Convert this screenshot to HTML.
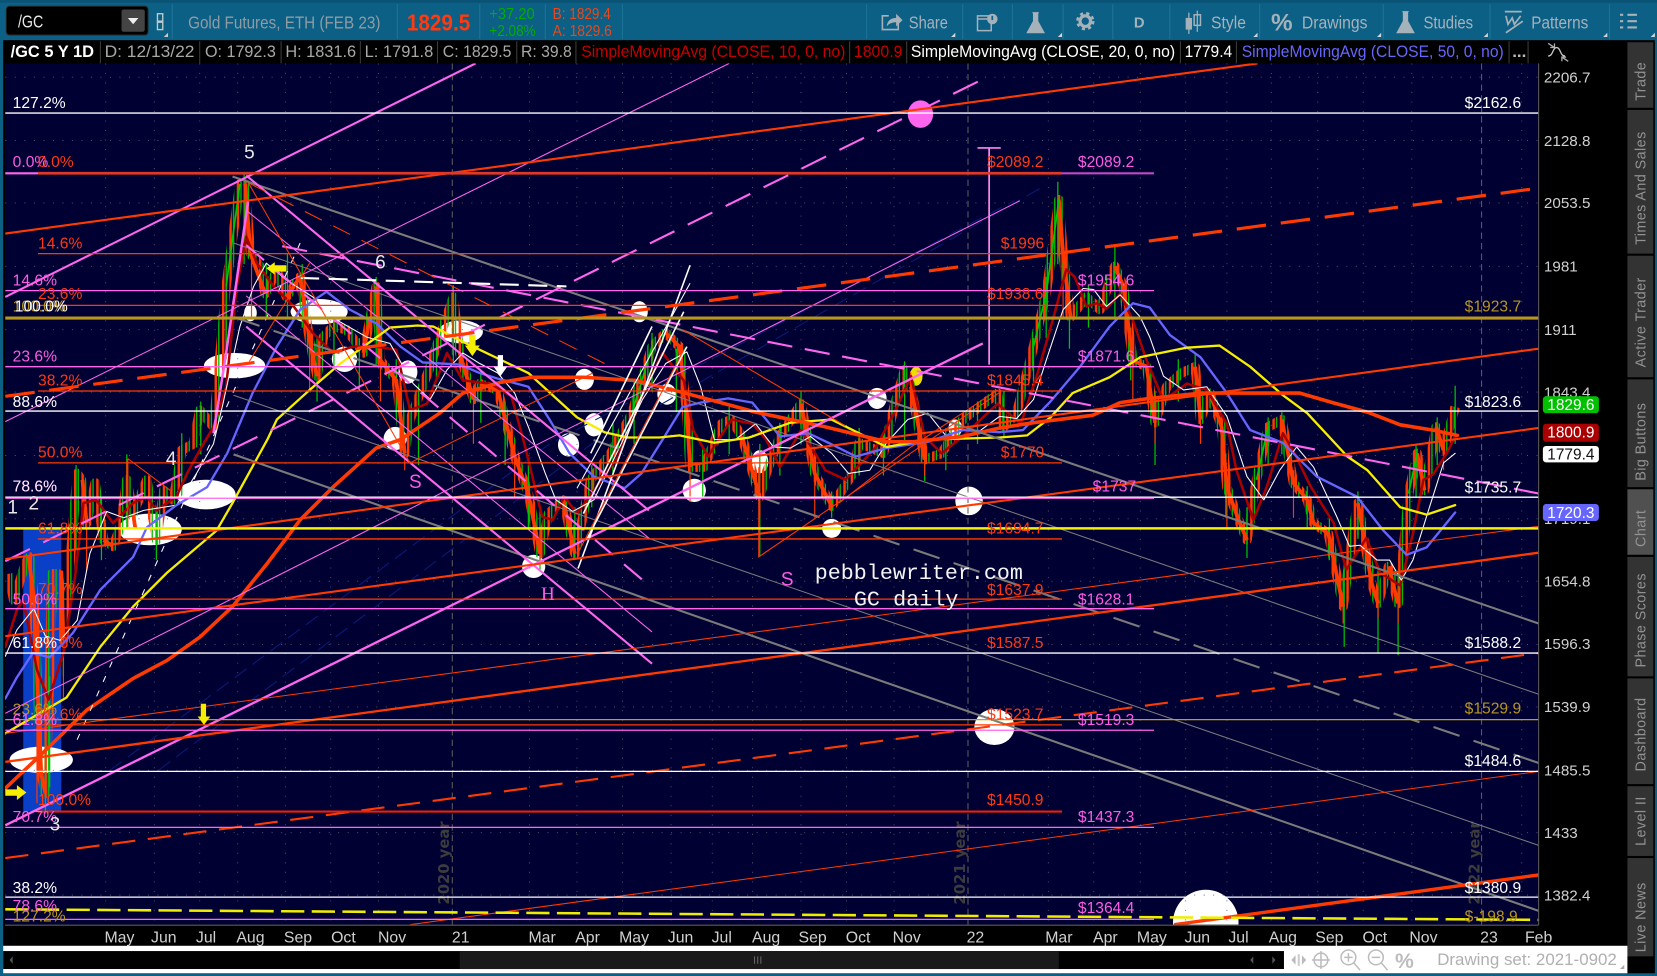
<!DOCTYPE html>
<html lang="en"><head><meta charset="utf-8"><title>/GC chart</title>
<style>
html,body{margin:0;padding:0;background:#0c5f85;width:1657px;height:976px;overflow:hidden}
svg{display:block;font-family:"Liberation Sans",sans-serif}
.o{fill:#ff3a10}.m{fill:#ff5ce6}.w{fill:#fff}.g{fill:#b8961e}
.l{font-size:14.8px}
.ax{font-size:14.4px;fill:#d0d0d0}
.dt{font-size:15px;fill:#d0d0d0;text-anchor:middle}
.tb{font-size:16.5px;fill:#a6b2ba}
.side{font-size:13.6px;fill:#929292;letter-spacing:.4px;text-anchor:middle}
</style></head><body>
<svg xmlns="http://www.w3.org/2000/svg" width="1657" height="976" viewBox="0 0 1568 923.6" preserveAspectRatio="none">
<defs>
<clipPath id="c"><rect x="4.7" y="60" width="1451.3" height="815"/></clipPath>
<pattern id="st" patternUnits="userSpaceOnUse" width="7" height="40">
<rect x="0" y="0" width="2.4" height="40" fill="#ff3a00"/>
<rect x="3.4" y="0" width="1.3" height="40" fill="#00c000"/>
</pattern>
</defs>
<!-- frame -->
<rect width="1568" height="924" fill="#0c5f85"/>
<rect width="1568" height="2.5" fill="#0a5375"/>
<rect x="3" y="38" width="1563" height="883" fill="#000"/>
<rect x="4.7" y="60" width="1451.3" height="815" fill="#000033"/>

<!-- toolbar -->
<rect x="6" y="6" width="134" height="27" rx="3" fill="#000" stroke="#222"/>
<rect x="115" y="9" width="22" height="21" rx="2" fill="#444"/>
<path d="M121 17h10l-5 6z" fill="#eee"/>
<text x="17" y="26" font-size="16.500" fill="#e8e8e8" textLength="24" lengthAdjust="spacingAndGlyphs">/GC</text>
<rect x="149" y="13" width="5" height="7" fill="none" stroke="#bcc" stroke-width="1.3"/><rect x="149" y="21" width="5" height="7" fill="none" stroke="#bcc" stroke-width="1.3"/>
<path d="M155 35l4-4v4z" fill="#ccc"/>
<g stroke="#1a7196" stroke-width="1.2">
<path d="M163 4v33M376 4v33M454 4v33M516 4v33M589 4v33M820 4v33M911 4v33M958 4v33M1006 4v33M1053 4v33M1107 4v33M1192 4v33M1309 4v33M1410 4v33M1523 4v33"/></g>
<text x="178" y="27" font-size="17" fill="#8f9ca4" textLength="182" lengthAdjust="spacingAndGlyphs">Gold Futures, ETH (FEB 23)</text>
<text x="385" y="29" font-size="22" font-weight="bold" fill="#ff3a10" textLength="60" lengthAdjust="spacingAndGlyphs">1829.5</text>
<text x="463" y="18" font-size="15" fill="#00ae00" textLength="43" lengthAdjust="spacingAndGlyphs">+37.20</text>
<text x="463" y="34" font-size="15" fill="#00ae00" textLength="44" lengthAdjust="spacingAndGlyphs">+2.08%</text>
<text x="523" y="18" font-size="15" fill="#e8481c" textLength="55" lengthAdjust="spacingAndGlyphs">B: 1829.4</text>
<text x="523" y="34" font-size="15" fill="#e8481c" textLength="56" lengthAdjust="spacingAndGlyphs">A: 1829.6</text>
<!-- share -->
<path d="M841 15h-6v13h15v-6" fill="none" stroke="#a6b2ba" stroke-width="1.5"/>
<path d="M839 25q1-8 9-8v-4l6 6-6 6v-4q-6 0-9 4z" fill="#a6b2ba"/>
<text x="860" y="27" class="tb" textLength="37" lengthAdjust="spacingAndGlyphs">Share</text>
<!-- alert -->
<path d="M925 15h13v14h-13zM925 18h9" fill="none" stroke="#a6b2ba" stroke-width="1.4"/><circle cx="939" cy="18" r="5" fill="#a6b2ba"/><rect x="938.200" y="15" width="1.6" height="4" fill="#0c5f85"/>
<!-- flask -->
<path d="M977 12h6M978 12v8l-6 11h16l-6-11v-8z" fill="#a6b2ba" stroke="#a6b2ba" stroke-width="1"/>
<!-- gear -->
<circle cx="1027" cy="20" r="5" fill="none" stroke="#a6b2ba" stroke-width="3"/><circle cx="1027" cy="20" r="7.500" fill="none" stroke="#a6b2ba" stroke-width="2.4" stroke-dasharray="3 3"/>
<text x="1078" y="26" font-size="14" font-weight="bold" fill="#a6b2ba" text-anchor="middle">D</text>
<!-- candles icon -->
<path d="M1125 12v20M1133 10v20" stroke="#a6b2ba" stroke-width="1.2"/><rect x="1122" y="17" width="6" height="11" fill="#a6b2ba"/><rect x="1130" y="14" width="6" height="10" fill="none" stroke="#a6b2ba" stroke-width="1.4"/>
<text x="1146" y="27" class="tb" textLength="33" lengthAdjust="spacingAndGlyphs">Style</text>
<text x="1213" y="29" font-size="23" font-weight="bold" fill="#a6b2ba" text-anchor="middle">%</text>
<text x="1232" y="27" class="tb" textLength="62" lengthAdjust="spacingAndGlyphs">Drawings</text>
<path d="M1327 11h6M1328 11v9l-6 11h16l-6-11v-9z" fill="#a6b2ba" stroke="#a6b2ba" stroke-width="1"/>
<text x="1347" y="27" class="tb" textLength="47" lengthAdjust="spacingAndGlyphs">Studies</text>
<path d="M1424 11h16M1425 15l2 8 4-6 2 6 6-8M1425 31l16-11" fill="none" stroke="#a6b2ba" stroke-width="1.6"/>
<text x="1449" y="27" class="tb" textLength="54" lengthAdjust="spacingAndGlyphs">Patterns</text>
<path d="M1540 14h9M1540 20h9M1540 26h9" stroke="#a6b2ba" stroke-width="2"/><path d="M1533 14h3M1533 20h3M1533 26h3" stroke="#a6b2ba" stroke-width="2"/>
<g fill="#d0d4d8"><path d="M900 35l4-4v4zM1001 35l4-4v4zM1186 35l4-4v4zM1303 35l4-4v4zM1404 35l4-4v4zM1517 35l4-4v4zM1562 35l4-4v4z"/></g>

<!-- legend -->
<text x="10" y="54" font-size="16" font-weight="bold" fill="#fff" textLength="79" lengthAdjust="spacingAndGlyphs">/GC 5 Y 1D</text>
<g font-size="16" fill="#a8a8a8">
<text x="99" y="54" textLength="85" lengthAdjust="spacingAndGlyphs">D: 12/13/22</text>
<text x="194" y="54" textLength="67" lengthAdjust="spacingAndGlyphs">O: 1792.3</text>
<text x="270" y="54" textLength="67" lengthAdjust="spacingAndGlyphs">H: 1831.6</text>
<text x="345" y="54" textLength="65" lengthAdjust="spacingAndGlyphs">L: 1791.8</text>
<text x="419" y="54" textLength="65" lengthAdjust="spacingAndGlyphs">C: 1829.5</text>
<text x="493" y="54" textLength="48" lengthAdjust="spacingAndGlyphs">R: 39.8</text>
</g>
<g font-size="16">
<text x="550" y="54" fill="#c40000" textLength="250" lengthAdjust="spacingAndGlyphs">SimpleMovingAvg (CLOSE, 10, 0, no)</text>
<text x="808" y="54" fill="#c40000" textLength="46" lengthAdjust="spacingAndGlyphs">1800.9</text>
<text x="862" y="54" fill="#fff" textLength="250" lengthAdjust="spacingAndGlyphs">SimpleMovingAvg (CLOSE, 20, 0, no)</text>
<text x="1121" y="54" fill="#fff" textLength="45" lengthAdjust="spacingAndGlyphs">1779.4</text>
<text x="1175" y="54" fill="#6666ff" textLength="248" lengthAdjust="spacingAndGlyphs">SimpleMovingAvg (CLOSE, 50, 0, no)</text>
<text x="1431" y="54" fill="#bbb" font-weight="bold">...</text>
</g>
<path d="M95 39v21M189 39v21M266 39v21M341 39v21M414 39v21M489 39v21M545 39v21M804 39v21M858 39v21M1117 39v21M1170 39v21M1428 39v21M1446 39v21" stroke="#3c3c3c" stroke-width="1"/>
<path d="M1465 53c5 0 4-8 8-8s3 8 8 8" fill="none" stroke="#ccc" stroke-width="1.200"/><path d="M1465 41l6 4M1471 41v4h-4M1484 58l-6-4M1478 58v-4h4" stroke="#b0b0b0" stroke-width="1.200" fill="none"/>

<g clip-path="url(#c)">
<!-- blue block -->
<rect x="22" y="500" width="36" height="268" fill="#0a3fc8"/>
<!-- ellipses -->
<g fill="#fff">
<ellipse cx="39" cy="719" rx="30" ry="12.5"/><ellipse cx="142" cy="501" rx="30" ry="15"/><ellipse cx="195" cy="468" rx="28" ry="14"/>
<ellipse cx="222" cy="346" rx="29" ry="12"/><ellipse cx="302" cy="295" rx="27" ry="12"/><ellipse cx="436" cy="314" rx="21" ry="11"/>
<ellipse cx="326" cy="340" rx="12" ry="12"/><ellipse cx="386" cy="352" rx="9" ry="11"/><ellipse cx="237" cy="296" rx="6" ry="8"/>
<ellipse cx="374" cy="415" rx="11" ry="11"/><ellipse cx="605" cy="295" rx="8" ry="10"/><ellipse cx="553" cy="359" rx="9" ry="10"/>
<ellipse cx="631" cy="373" rx="9" ry="10"/><ellipse cx="562" cy="402" rx="9" ry="11"/><ellipse cx="538" cy="421" rx="10" ry="11"/>
<ellipse cx="719" cy="437" rx="8" ry="11"/><ellipse cx="657" cy="464" rx="11" ry="11"/><ellipse cx="787" cy="500" rx="9" ry="9"/>
<ellipse cx="830" cy="377" rx="9" ry="10"/><ellipse cx="917" cy="474" rx="13" ry="13.5"/><ellipse cx="904" cy="405" rx="6.5" ry="8"/>
<ellipse cx="505" cy="536" rx="11" ry="11"/><ellipse cx="941" cy="688" rx="19" ry="17"/><ellipse cx="1141" cy="873" rx="31" ry="31"/>
</g>
<ellipse cx="871" cy="108" rx="12" ry="13" fill="#ff66ee"/><ellipse cx="867" cy="356" rx="6" ry="9" fill="#eedd00"/>
<!-- grid -->
<path d="M5 73H1456M5 133H1456M5 192H1456M5 252H1456M5 312H1456M5 371H1456M5 431H1456M5 491H1456M5 550H1456M5 610H1456M5 669H1456M5 729H1456M5 788H1456M5 847H1456" stroke="#5a5a70" stroke-width=".8" stroke-dasharray="1 8"/>
<path d="M100 60V875M146 60V875M189 60V875M225 60V875M270 60V875M313 60V875M358 60V875M501 60V875M546 60V875M589 60V875M635 60V875M674 60V875M712 60V875M758 60V875M801 60V875M846 60V875M992 60V875M1035 60V875M1079 60V875M1122 60V875M1161 60V875M1203 60V875M1247 60V875M1290 60V875M1336 60V875M1440 60V875" stroke="#5a5a70" stroke-width=".8" stroke-dasharray="1 8"/>
<path d="M428 60V875M916 60V875M1402 60V875" stroke="#5c5c5c" stroke-width="1" stroke-dasharray="6 4"/>
<g font-family="DejaVu Sans,sans-serif" font-size="14" font-weight="bold" fill="#3c3c3c">
<text transform="translate(425,856) rotate(-90)">2020 year</text>
<text transform="translate(913,856) rotate(-90)">2021 year</text>
<text transform="translate(1400,856) rotate(-90)">2022 year</text>
</g>
<!-- navy lines -->
<path d="M104 729L520 420L960 190M150 729L560 420L990 175" stroke="#0c1a78" stroke-width="1" fill="none" stroke-dasharray="14 7"/>

<!-- candles -->
<polyline fill="none" stroke="url(#st)" stroke-width="9" stroke-linejoin="round" points="8,543 13,568 24,533 28,527 32,565 35,637 39,732 43,751 47,637 49,543 55,543 60,606 68,511 73,448 77,454 82,495 90,457 98,511 107,517 114,498 120,454 126,486 139,454 148,511 155,464 164,473 172,426 183,420 189,388 202,404 214,271 227,174 232,174 237,240 246,252 251,278 262,256 271,281 284,262 293,322 300,356 306,319 315,309 328,312 344,334 356,271 360,341 375,360 383,429 388,397 407,347 413,328 429,281 435,334 448,378 454,363 471,369 487,432 500,467 511,524 519,486 533,473 544,524 559,454 578,429 598,391 617,328 630,315 643,328 650,391 653,442 666,442 683,401 692,397 702,413 719,470 725,448 738,413 758,382 771,448 787,479 807,448 813,419 836,429 846,385 856,350 862,366 875,435 891,429 911,397 944,372 950,404 962,391 978,328 990,278 1002,189 1006,240 1013,300 1028,281 1041,293 1055,252 1063,271 1072,341 1085,347 1093,400 1104,366 1118,353 1131,347 1136,397 1145,372 1156,404 1161,461 1172,492 1180,511 1189,454 1200,404 1213,397 1224,457 1237,473 1243,495 1257,505 1271,574 1281,498 1285,476 1298,552 1304,571 1314,536 1323,571 1333,467 1341,429 1348,464 1359,404 1366,426 1377,385"/>
<!-- wicks -->
<path d="M43 700V770M47 640V745M60 560V640M72 440V520M96 470V530M120 430V500M148 480V530M172 410V470M190 380V430M214 270V340M231 165V250M252 250V300M272 240V300M286 250V310M300 320V380M316 300V350M340 320V370M356 262V345M375 340V390M396 380V440M413 320V360M429 270V345M455 350V400M478 380V440M500 440V500M511 480V540M544 480V530M560 440V480M580 400V450M600 360V420M617 315V370M640 330V390M665 425V470M690 385V430M719 420V526M738 400V450M758 370V420M787 465V490M813 405V450M836 410V450M856 342V420M875 420V455M895 405V445M925 380V420M950 370V415M978 320V370M1001 172V250M1012 290V330M1030 270V310M1055 232V300M1070 310V360M1093 370V440M1115 340V380M1131 335V380M1160 430V490M1180 480V528M1200 395V440M1213 390V430M1237 460V500M1258 490V530M1272 530V612M1285 465V510M1304 540V618M1323 540V620M1340 420V470M1360 395V440M1377 365V420M990 262V320" stroke="#00c000" stroke-width="1.200"/>
<path d="M35 620V760M60 590V660M82 480V540M120 436V470M238 230V300M293 310V370M360 330V380M383 415V445M448 365V420M487 420V470M511 500V530M653 430V475M719 440V490M771 430V490M875 420V450M1006 232V300M1072 330V380M1093 385V420M1136 385V420M1161 450V500M1224 445V490M1271 560V590M1304 555V585M1323 555V590M1366 420V445" stroke="#ff3a00" stroke-width="1.100"/>
<path d="M27 527L32 565L35 637L39 732L43 751M58 540L60 606M78 454L82 495M98 511L107 517M126 486L128 500M232 174L237 240L251 278M271 281L284 262M284 262L293 322L300 356M344 334L350 300M356 271L360 341L375 360L383 429M435 334L448 378M454 363L471 369L487 432L500 467L511 524M533 473L544 524M630 315L643 328L650 391L653 442M702 413L719 470M758 382L771 448L787 479M862 366L875 435M1002 189L1006 240L1013 300M1055 252L1063 271L1072 341L1085 347L1093 400M1131 347L1136 397M1145 372L1156 404L1161 461L1172 492L1180 511M1213 397L1224 457L1237 473L1243 495L1257 505L1271 574M1285 476L1298 552L1304 571M1314 536L1323 571M1348 464L1341 429M1359 404L1366 426" fill="none" stroke="#ff3a00" stroke-width="3.600"/>
<path d="M214 271L227 174M978 328L990 278L1002 189M598 391L617 328M1333 467L1341 429M1189 454L1200 404" stroke="#00c800" stroke-width="1.600" fill="none"/>

<!-- MAs -->
<g stroke-linejoin="round" stroke-linecap="round" fill="none">
<polyline stroke="#aa0000" stroke-width="2.400" points="5,612 16,577 22,568 35,634 46,662 60,618 71,546 79,476 91,473 107,495 126,476 139,470 148,483 167,470 177,448 189,426 202,404 214,366 224,271 233,224 243,249 259,271 278,290 296,315 315,334 334,328 356,328 375,331 388,388 404,382 423,334 438,360 464,363 484,375 497,423 513,489 523,492 534,470 546,486 562,464 585,432 611,366 627,334 647,360 656,407 670,432 692,397 712,401 725,416 738,442 758,407 781,445 800,454 829,423 846,391 862,356 875,413 891,429 911,413 944,382 966,401 981,356 997,300 1009,255 1017,262 1028,290 1038,287 1047,292 1060,278 1072,303 1085,341 1101,379 1123,363 1142,369 1161,401 1170,445 1186,492 1199,460 1214,410 1225,429 1240,460 1262,495 1274,539 1293,509 1306,542 1325,554 1337,505 1347,454 1356,449 1369,429 1377,413"/>
<polyline stroke="#fff" stroke-width="1" points="5,621 16,596 32,576 43,602 57,606 73,587 85,524 101,484 117,490 136,483 167,478 186,448 202,420 211,382 227,309 240,271 252,249 271,265 296,281 319,303 347,319 369,325 391,363 407,378 423,350 438,334 454,344 471,353 487,372 500,404 516,448 526,473 542,484 562,473 585,426 608,378 630,344 650,333 663,366 676,416 696,416 715,401 732,423 748,424 767,413 787,429 803,448 823,445 839,419 859,397 878,391 898,416 924,410 946,394 962,396 978,378 990,341 1006,293 1025,273 1035,274 1047,290 1060,279 1079,300 1088,319 1101,356 1120,369 1142,366 1161,394 1180,451 1196,473 1211,445 1227,423 1243,442 1265,489 1277,517 1287,516 1303,530 1315,530 1326,549 1337,530 1353,479 1366,438 1377,429"/>
<polyline stroke="#6666ff" stroke-width="2.200" points="5,661 16,641 31,618 47,622 69,599 95,558 126,527 139,499 167,478 196,461 215,429 239,372 262,328 284,293 309,276 331,293 356,306 379,328 400,343 435,345 454,353 470,358 500,366 520,397 539,429 562,451 591,462 607,448 627,416 646,385 663,381 689,377 712,381 738,413 765,410 784,419 810,432 839,424 878,418 911,407 946,409 968,407 994,380 1022,347 1050,309 1072,287 1088,291 1107,317 1136,338 1161,372 1183,407 1214,419 1246,451 1284,470 1309,502 1331,525 1350,518 1377,485"/>
<polyline stroke="#f5ee00" stroke-width="2.200" points="5,694 63,660 95,612 126,574 158,542 205,502 220,476 253,416 262,397 293,369 322,344 344,328 369,310 395,308 410,309 435,322 454,331 500,353 546,395 572,409 594,414 624,414 643,412 676,419 709,414 748,400 787,397 839,423 878,416 946,414 972,412 994,395 1015,372 1050,357 1079,338 1123,329 1154,327 1183,347 1214,374 1237,391 1275,432 1294,445 1325,480 1350,487 1377,478"/>
<polyline stroke="#ff3a00" stroke-width="3.400" points="5,746 40,713 82,672 126,642 158,625 189,603 220,574 253,533 284,492 315,461 356,424 379,416 416,391 438,372 473,362 503,357 552,357 601,360 637,369 682,381 715,390 781,404 839,418 865,418 911,413 946,405 978,400 1010,396 1034,393 1060,381 1088,377 1136,372 1183,372 1230,372 1261,381 1294,390 1325,402 1356,407 1379,412"/>
</g>

<!-- gray lines -->
<g fill="none" stroke="#7a7a7a">
<path d="M220 167L1456 590" stroke-width="2"/>
<path d="M221 230L1456 657" stroke-width="1"/>
<path d="M221 300L1456 722" stroke-width="2" stroke-dasharray="26 14"/>
<path d="M221 374L1456 800" stroke-width="1"/>
<path d="M221 430L1456 862" stroke-width="2"/>
</g>
<!-- magenta lines -->
<g fill="none" stroke="#ff66ee">
<path d="M5 281L450 60" stroke-width="2"/>
<path d="M5 399L690 60" stroke-width="1"/>
<path d="M5 781L930 325" stroke-width="2.200"/>
<path d="M5 531L930 75" stroke-width="2" stroke-dasharray="26 14"/>
<path d="M5 675L965 190" stroke-width="1"/>
<path d="M233 166L614 483" stroke-width="2"/>
<path d="M233 309L617 628" stroke-width="2"/>
<path d="M233 199L615 510" stroke-width="1"/>
<path d="M233 280L617 598" stroke-width="1"/>
<path d="M233 232L613 553" stroke-width="2" stroke-dasharray="22 14"/>
<path d="M267 233L1456 467" stroke-width="2" stroke-dasharray="24 12"/>
<path d="M235 189L214 334L202 410" stroke-width="2.400"/>
</g>
<path d="M925 140h22M936 140V345" stroke="#ff88ee" stroke-width="1.600" fill="none"/>

<!-- white lines -->
<g fill="none" stroke="#fff">
<path d="M547 538L653 251" stroke-width="1.500"/><path d="M546 462L653 268" stroke-width="1"/><path d="M555 511L650 328" stroke-width="1.500"/><path d="M552 486L647 295" stroke-width="1.500"/><path d="M559 429L617 309" stroke-width="1.500"/>
<path d="M284 263L536 271" stroke-width="2" stroke-dasharray="18 9"/>
<path d="M73 700L284 230" stroke-width="1" stroke-dasharray="6 9"/>
</g>

<!-- thin orange -->
<g fill="none" stroke="#ff3a00" stroke-width="1">
<path d="M235 173L388 438L561 353"/><path d="M236 342L293 249"/><path d="M121 434L161 464M121 434V500"/>
<path d="M235 173L578 347" stroke-dasharray="18 12"/>
<path d="M646 312L800 403"/><path d="M546 525L647 331"/><path d="M718 442V527L945 372"/><path d="M794 476L862 423L944 369"/>
</g>
<!-- sloped orange -->
<g fill="none" stroke="#ff3a00">
<path d="M5 221L1190 60" stroke-width="2"/>
<path d="M5 375L1456 178" stroke-width="3" stroke-dasharray="28 14"/>
<path d="M5 529L1456 330" stroke-width="2"/>
<path d="M5 602L1456 405" stroke-width="2"/>
<path d="M5 721L1456 523" stroke-width="2.200"/>
<path d="M5 694L1456 498" stroke-width="1"/>
<path d="M5 812L1456 618" stroke-width="2" stroke-dasharray="22 12"/>
<path d="M388 875L1456 730" stroke-width="1"/>
<path d="M1111 875L1456 828" stroke-width="3.200"/>
</g>
<!-- horizontals -->
<g fill="none" stroke-width="1.200">
<path d="M5 107H1456M5 389H1456M5 470.5H1456M5 618H1456M5 730H1456M5 849H1456" stroke="#fff"/>
<path d="M36 240H1005M36 289H1005M36 370H1005M36 438H1005M36 510H1005M36 567H1005M36 686H1005" stroke="#ff3a00"/>
<path d="M5 275H1092M5 347H1092M5 471.5H1092M5 576H1092M5 691H1092M5 783H1092M5 870H1092" stroke="#ff66ee"/>
<path d="M5 681H1456" stroke="#c8a000"/>
<path d="M36 768H1005" stroke="#e8200c" stroke-width="2"/>
<path d="M5 164H36" stroke="#ff66ee" stroke-width="2"/>
<path d="M36 164H1005" stroke="#e03828" stroke-width="2.600"/>
<path d="M1005 164H1092" stroke="#c04ac4" stroke-width="2"/>
<path d="M5 301H1456" stroke="#b8961e" stroke-width="3"/>
<path d="M5 500H1456" stroke="#f5f000" stroke-width="2.400"/>
<path d="M5 860.5L1456 870.5" stroke="#eeee00" stroke-width="2.400" stroke-dasharray="22 7"/>
</g>
<!-- arrows -->
<path d="M252 254l8-6v3h11v6h-11v3z" fill="#f5ee00"/>
<path d="M5 747h11v-4l9 7-9 7v-4H5z" fill="#f5ee00"/>
<path d="M444 317h6v10h4l-7 10-7-10h4z" fill="#f5ee00"/>
<path d="M190 666h5v12h4l-6 8-6-8h3z" fill="#f5ee00"/>
<path d="M471 336h5v11h4l-6.500 9-6.500-9h4z" fill="#fff"/>

<!-- left labels -->
<g class="l">
<text x="12" y="102" class="w">127.2%</text>
<text x="12" y="158" class="m">0.0%</text><text x="36" y="158" class="o">0.0%</text>
<text x="36" y="235" class="o">14.6%</text>
<text x="12" y="270" class="m">14.6%</text>
<text x="36" y="283" class="o">23.6%</text>
<text x="12" y="295" class="g">100.0%</text><text x="14" y="295" class="w">100.0%</text>
<text x="12" y="342" class="m">23.6%</text>
<text x="36" y="365" class="o">38.2%</text>
<text x="12" y="385" class="w">88.6%</text>
<text x="36" y="433" class="o">50.0%</text>
<text x="12" y="465" class="m">78.6%</text><text x="12" y="465" class="w" opacity=".85">78.6%</text>
<text x="36" y="505" class="o">61.8%</text>
<text x="36" y="562" class="o">70.7%</text>
<text x="12" y="572" class="m">50.0%</text>
<text x="36" y="613" class="o">78.6%</text>
<text x="12" y="613" class="w">61.8%</text>
<text x="12" y="676" class="g">23.6%</text>
<text x="36" y="681" class="o">78.6%</text>
<text x="12" y="686" class="m">61.8%</text>
<text x="36" y="762" class="o">100.0%</text>
<text x="12" y="778" class="m">70.7%</text>
<text x="12" y="845" class="w">38.2%</text>
<text x="12" y="862" class="m">78.6%</text>
<text x="12" y="872" class="g">127.2%</text>
<!-- right labels -->
<text x="1386" y="102" class="w">$2162.6</text>
<text x="1386" y="295" class="g">$1923.7</text>
<text x="1386" y="385" class="w">$1823.6</text>
<text x="1386" y="466" class="w">$1735.7</text>
<text x="1386" y="613" class="w">$1588.2</text>
<text x="1386" y="675" class="g">$1529.9</text>
<text x="1386" y="725" class="w">$1484.6</text>
<text x="1386" y="845" class="w">$1380.9</text>
<text x="1386" y="872" class="g">$-198.9</text>
<!-- mid orange -->
<text x="934" y="158" class="o">$2089.2</text>
<text x="947" y="235" class="o">$1996</text>
<text x="934" y="283" class="o">$1938.6</text>
<text x="934" y="365" class="o">$1845.4</text>
<text x="947" y="433" class="o">$1770</text>
<text x="934" y="505" class="o">$1694.7</text>
<text x="934" y="563" class="o">$1637.9</text>
<text x="934" y="613" class="o">$1587.5</text>
<text x="934" y="681" class="o">$1523.7</text>
<text x="934" y="762" class="o">$1450.9</text>
<!-- mid magenta -->
<text x="1020" y="158" class="m">$2089.2</text>
<text x="1020" y="270" class="m">$1954.6</text>
<text x="1020" y="342" class="m">$1871.6</text>
<text x="1034" y="465" class="m">$1737</text>
<text x="1020" y="572" class="m">$1628.1</text>
<text x="1020" y="686" class="m">$1519.3</text>
<text x="1020" y="778" class="m">$1437.3</text>
<text x="1020" y="864" class="m">$1364.4</text>
</g>
<g font-size="18" fill="#e8e8e8">
<text x="7" y="486">1</text><text x="27" y="482">2</text><text x="157" y="440">4</text><text x="231" y="150">5</text><text x="355" y="254">6</text><text x="47" y="786">3</text>
</g>
<g font-size="18" fill="#ff5ce6">
<text x="387" y="462">S</text><text x="512" y="568" font-family="Liberation Serif,serif">H</text><text x="739" y="554">S</text>
</g>
<g font-family="Liberation Mono,monospace" font-size="20" fill="#f4f4f4">
<text x="771" y="548" textLength="197" lengthAdjust="spacingAndGlyphs">pebblewriter.com</text>
<text x="808" y="573" textLength="99" lengthAdjust="spacingAndGlyphs">GC daily</text>
</g>
</g>
<path d="M4.700 875.5H1456M1456 60V875.5" stroke="#5a5a5a" stroke-width="1" fill="none"/>

<!-- axis -->
<g class="ax">
<text x="1461" y="78">2206.7</text><text x="1461" y="138">2128.8</text><text x="1461" y="197">2053.5</text><text x="1461" y="257">1981</text><text x="1461" y="317">1911</text><text x="1461" y="376">1843.4</text><text x="1461" y="496">1719.1</text><text x="1461" y="555">1654.8</text><text x="1461" y="614">1596.3</text><text x="1461" y="674">1539.9</text><text x="1461" y="734">1485.5</text><text x="1461" y="793">1433</text><text x="1461" y="852">1382.4</text>
</g>
<g font-size="14.6" text-anchor="middle">
<rect x="1460" y="375" width="53" height="16" rx="3" fill="#00c000"/><text x="1486.5" y="388" fill="#fff">1829.6</text>
<rect x="1460" y="401" width="53" height="17" rx="3" fill="#aa0000"/><text x="1486.5" y="414" fill="#fff">1800.9</text>
<rect x="1460" y="422" width="53" height="15.5" rx="3" fill="#fff"/><text x="1486.5" y="435" fill="#111">1779.4</text>
<rect x="1460" y="477" width="53" height="16" rx="3" fill="#6666ff"/><text x="1486.5" y="490" fill="#fff">1720.3</text>
</g>
<g class="dt">
<text x="113" y="892">May</text><text x="155" y="892">Jun</text><text x="195" y="892">Jul</text><text x="237" y="892">Aug</text><text x="282" y="892">Sep</text><text x="325" y="892">Oct</text><text x="371" y="892">Nov</text><text x="436" y="892">21</text><text x="513" y="892">Mar</text><text x="556" y="892">Apr</text><text x="600" y="892">May</text><text x="644" y="892">Jun</text><text x="683" y="892">Jul</text><text x="725" y="892">Aug</text><text x="769" y="892">Sep</text><text x="812" y="892">Oct</text><text x="858" y="892">Nov</text><text x="923" y="892">22</text><text x="1002" y="892">Mar</text><text x="1046" y="892">Apr</text><text x="1090" y="892">May</text><text x="1133" y="892">Jun</text><text x="1172" y="892">Jul</text><text x="1214" y="892">Aug</text><text x="1258" y="892">Sep</text><text x="1301" y="892">Oct</text><text x="1347" y="892">Nov</text><text x="1409" y="892">23</text><text x="1456" y="892">Feb</text>
</g>

<!-- sidebar -->
<g fill="#333">
<rect x="1540" y="40" width="24.5" height="62"/><rect x="1540" y="104" width="24.5" height="136"/><rect x="1540" y="242" width="24.5" height="115"/><rect x="1540" y="359" width="24.5" height="102"/>
<rect x="1540" y="463" width="24.5" height="62" fill="#505050"/><rect x="1540" y="527" width="24.5" height="113"/><rect x="1540" y="642" width="24.5" height="100"/><rect x="1540" y="744" width="24.5" height="66"/><rect x="1540" y="812" width="24.5" height="93"/>
</g>
<g class="side">
<text transform="translate(1557,77) rotate(-90)">Trade</text>
<text transform="translate(1557,178) rotate(-90)">Times And Sales</text>
<text transform="translate(1557,305) rotate(-90)">Active Trader</text>
<text transform="translate(1557,418) rotate(-90)">Big Buttons</text>
<text transform="translate(1557,500) rotate(-90)">Chart</text>
<text transform="translate(1557,587) rotate(-90)">Phase Scores</text>
<text transform="translate(1557,695) rotate(-90)">Dashboard</text>
<text transform="translate(1557,777) rotate(-90)">Level II</text>
<text transform="translate(1557,868) rotate(-90)">Live News</text>
</g>

<!-- bottom -->
<rect x="3" y="895" width="1537" height="26" fill="#fff"/>
<rect x="3" y="900" width="1212" height="17" fill="#000"/>
<rect x="435" y="900" width="567" height="17" fill="#1a1a1a"/>
<path d="M714 905v7M717 905v7M720 905v7" stroke="#666" stroke-width="1"/>
<path d="M12 905l-3 3.500 3 3.500zM1186 905l-3 3.500 3 3.500zM1204 905l3 3.500-3 3.500z" fill="#555"/>
<path d="M1226 904l-4 4.500 4 4.500zM1232 904l4 4.500-4 4.500z" fill="#bbb"/><path d="M1229 903v11" stroke="#ccc" stroke-width="2"/>
<g fill="none" stroke="#bcbcbc" stroke-width="1.400">
<circle cx="1250" cy="908.500" r="6.500"/><path d="M1250 900v17M1241.500 908.500h17"/>
<circle cx="1276" cy="906" r="7"/><path d="M1281 911l6 7M1272 906h8M1276 902v8"/>
<circle cx="1302" cy="906" r="7"/><path d="M1307 911l6 7M1298 906h8"/>
</g>
<text x="1329" y="916" font-size="20" font-weight="bold" fill="#bcbcbc" text-anchor="middle">%</text>
<text x="1360" y="913" font-size="15.500" fill="#b0b0b0" textLength="170" lengthAdjust="spacingAndGlyphs">Drawing set: 2021-0902</text>
<path d="M1533 917l4-4v4z" fill="#aaa"/>
</svg>
</body></html>
